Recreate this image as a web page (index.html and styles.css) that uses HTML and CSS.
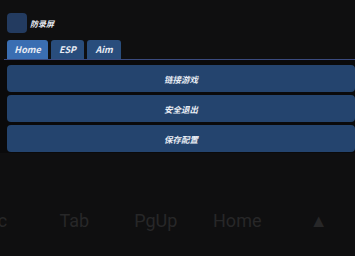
FILE: index.html
```html
<!DOCTYPE html>
<html lang="zh-CN">
<head>
    <meta charset="UTF-8">
    <meta name="viewport" content="width=device-width, initial-scale=1.0">
    <title>Menu</title>
    <link rel="stylesheet" href="styles.css">
</head>
<body>
    <div class="menu">
        <label class="check-row">
            <span class="check-box"></span>
            <span class="check-label">防录屏</span>
        </label>
        <div class="tab-bar">
            <div class="tab active tab-home">Home</div>
            <div class="tab tab-esp">ESP</div>
            <div class="tab tab-aim">Aim</div>
        </div>
        <div class="panel">
            <button class="menu-btn">链接游戏</button>
            <button class="menu-btn">安全退出</button>
            <button class="menu-btn">保存配置</button>
        </div>
    </div>
    <div class="keys">
        <span class="key">Esc</span>
        <span class="key">Tab</span>
        <span class="key">PgUp</span>
        <span class="key">Home</span>
        <span class="key">▲</span>
    </div>
</body>
</html>
```

FILE: styles.css
```css
body {
    margin: 0;
    width: 355px;
    height: 256px;
    overflow: hidden;
    background-color: #0f0f10;
    font-family: 'Noto Sans CJK SC', 'Noto Sans', sans-serif;
    color: #e8ecf4;
}
.menu {
    padding: 13px 0 0 7px;
}
.check-row {
    display: flex;
    align-items: center;
    gap: 3px;
    height: 20px;
}
.check-box {
    width: 20px;
    height: 20px;
    border-radius: 4px;
    background-color: #233b60;
}
.check-label {
    font-size: 8px;
    font-style: italic;
    font-weight: bold;
    margin-top: 1px;
}
.tab-bar {
    display: flex;
    gap: 3px;
    margin-top: 7px;
    margin-left: -3px;
    padding-left: 3px;
    height: 19px;
    border-bottom: 1px solid #3a4a7e;
}
.tab {
    display: flex;
    align-items: center;
    justify-content: center;
    height: 19px;
    border-radius: 3px 3px 0 0;
    background-color: #294d7c;
    font-size: 9px;
    font-style: italic;
    font-weight: bold;
}
.tab.active {
    background-color: #3a6eb2;
}
.tab-home {
    width: 41px;
}
.tab-esp {
    width: 33px;
}
.tab-aim {
    width: 34px;
}
.panel {
    display: flex;
    flex-direction: column;
    gap: 3px;
    margin-left: -7px;
    padding: 5px 0 0 7px;
    background-color: #0a0a0b;
    height: 88px;
}
.menu-btn {
    height: 27px;
    border: none;
    border-radius: 4px;
    background-color: #24446e;
    color: #e8ecf4;
    font-family: inherit;
    font-size: 8.5px;
    font-style: italic;
    font-weight: bold;
    padding: 0;
}
.keys {
    display: flex;
    margin-top: 57px;
    margin-left: -48px;
}
.key {
    width: 81.5px;
    flex: none;
    text-align: center;
    font-family: Roboto, 'Liberation Sans', sans-serif;
    font-size: 18px;
    color: #272728;
    line-height: 22px;
}
```
